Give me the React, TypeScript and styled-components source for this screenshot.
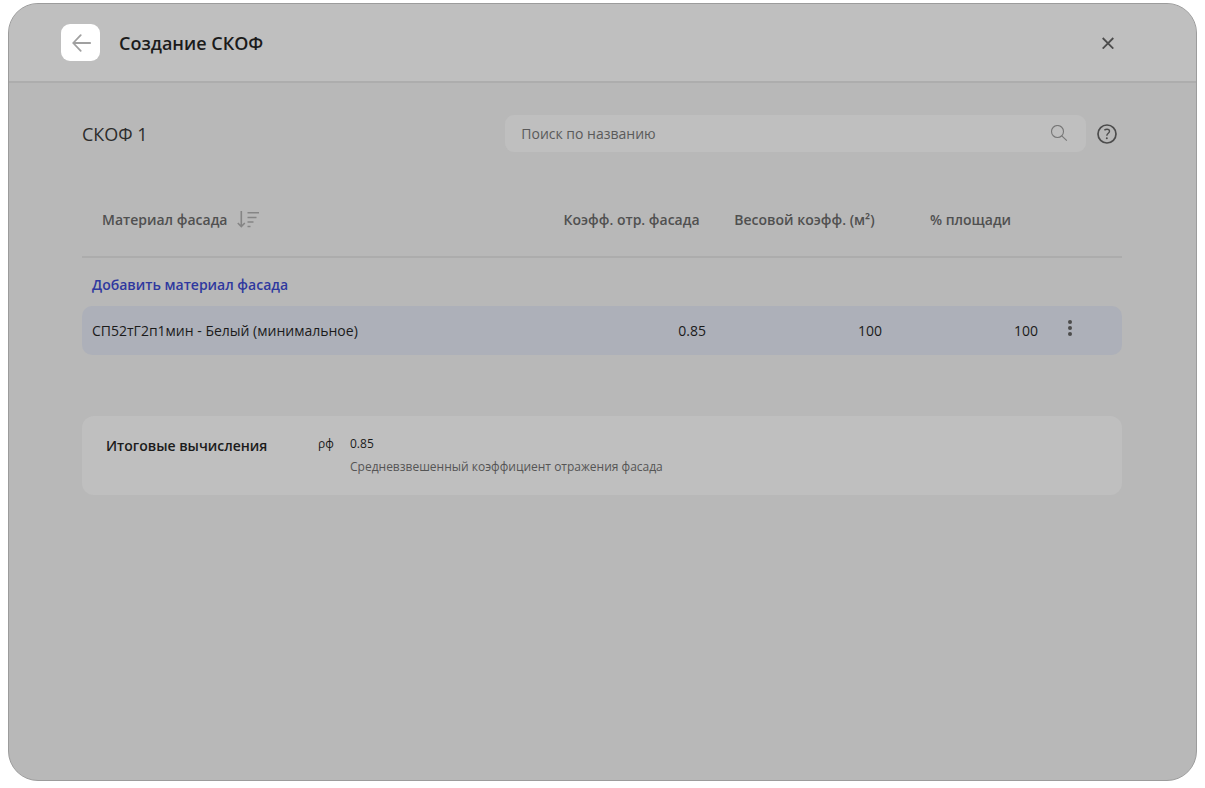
import React from "react";
import styled, { createGlobalStyle } from "styled-components";

const GlobalStyle = createGlobalStyle`
  *, *::before, *::after { box-sizing: border-box; }
  body {
    margin: 0;
    background: #ffffff;
    color: #1b1b1b;
    font-family: "Open Sans", "Noto Sans", sans-serif;
    font-size: 14px;
    line-height: 20px;
  }
  button, input { font: inherit; color: inherit; }
`;

const Page = styled.div`
  display: flex;
  min-height: 100vh;
  padding: 3px 8px 7px;
`;

const Dialog = styled.main`
  flex: 1;
  min-width: 0;
  overflow: hidden;
  border: 1px solid #9c9c9c;
  border-radius: 30px;
  background: #b8b8b8;
`;

const Header = styled.header`
  display: flex;
  align-items: center;
  gap: 19px;
  height: 79px;
  padding: 0 76px 0 52px;
  border-bottom: 2px solid #adadad;
  background: #bfbfbf;
`;

const IconButton = styled.button<{ $width?: number }>`
  display: flex;
  align-items: center;
  justify-content: center;
  width: ${({ $width = 24 }) => $width}px;
  height: 24px;
  padding: 0;
  border: 0;
  background: none;
  color: #4c4c4c;
  cursor: pointer;
`;

const BackButton = styled(IconButton)`
  width: 39px;
  height: 37px;
  border-radius: 9px;
  background: #ffffff;
  color: #a0a0a0;
`;

const Title = styled.h1`
  flex: 1;
  margin: 0;
  font-size: 18px;
  font-weight: 600;
  line-height: 24px;
`;

const Content = styled.div`
  padding: 32px 74px 32px 73px;
`;

const Toolbar = styled.div`
  display: flex;
  align-items: center;
  gap: 9px;
  padding-right: 3px;
`;

const GroupName = styled.h2`
  flex: 1;
  margin: 0;
  color: #2c2c2c;
  font-size: 18px;
  font-weight: 400;
  line-height: 24px;
`;

const SearchBox = styled.label`
  display: flex;
  align-items: center;
  width: 56%;
  height: 37px;
  padding: 0 18px 0 16px;
  border-radius: 9px;
  background: #bfbfbf;
  color: #777777;
`;

const SearchInput = styled.input`
  flex: 1;
  min-width: 0;
  padding: 0;
  border: 0;
  outline: 0;
  background: none;
  &::placeholder { color: #5a5a5a; opacity: 1; }
`;

const Table = styled.table`
  width: 100%;
  margin-top: 30px;
  border-collapse: separate;
  border-spacing: 0;
  table-layout: fixed;
`;

const Column = styled.col<{ $width?: number }>`
  width: ${({ $width }) => ($width ? `${$width}px` : "auto")};
`;

const HeadCell = styled.th<{ $start?: boolean }>`
  height: 76px;
  padding: ${({ $start }) => ($start ? "2px 0 0 20px" : "2px 3px 0 0")};
  border-bottom: 2px solid #acacac;
  color: #505050;
  font-weight: 600;
  text-align: ${({ $start }) => ($start ? "left" : "center")};
  white-space: nowrap;
`;

const HeadLabel = styled.span`
  display: flex;
  align-items: center;
  gap: 9px;
`;

const SortButton = styled(IconButton)`
  color: #858585;
`;

const AddCell = styled.td`
  height: 48px;
  padding: 6px 10px 0;
`;

const AddButton = styled.button`
  padding: 0;
  border: 0;
  background: none;
  color: #2f389f;
  font-weight: 600;
  cursor: pointer;
`;

const Cell = styled.td<{ $numeric?: boolean }>`
  height: 49px;
  padding: 0 12px 0 10px;
  background: #adb0b9;
  text-align: ${({ $numeric }) => ($numeric ? "right" : "left")};
  &:first-child { border-radius: 10px 0 0 10px; }
`;

const MenuCell = styled(Cell)`
  padding: 0 0 6px;
  border-radius: 0 10px 10px 0;
`;

const Summary = styled.section`
  display: flex;
  align-items: flex-start;
  min-height: 79px;
  margin-top: 61px;
  padding: 18px 24px;
  border-radius: 12px;
  background: #bfbfbf;
`;

const SummaryTitle = styled.h3`
  width: 212px;
  margin: 0;
  padding-top: 2px;
  font-size: 14px;
  font-weight: 600;
  line-height: 20px;
`;

const Results = styled.dl`
  display: grid;
  grid-template-columns: 32px auto;
  row-gap: 3px;
  margin: 0;
  font-size: 12px;
  line-height: 20px;
`;

const Symbol = styled.dt``;

const Value = styled.dd<{ $muted?: boolean }>`
  grid-column: 2;
  margin: 0;
  color: ${({ $muted }) => ($muted ? "#555555" : "#1b1b1b")};
  font-weight: ${({ $muted }) => ($muted ? 400 : 500)};
`;

const BackIcon = () => (
  <svg width="20" height="18" viewBox="0 0 20 18" fill="none" stroke="currentColor" strokeWidth="1.8" strokeLinecap="round" strokeLinejoin="round" aria-hidden="true">
    <path d="M19.2 9H2.200M9.700 1.200 2.200 9l7.500 7.800" />
  </svg>
);

const CloseIcon = () => (
  <svg width="12" height="12" viewBox="0 0 12 12" stroke="currentColor" strokeWidth="1.8" aria-hidden="true">
    <path d="M.7 1l10.600 10.600M11.300 1 .7 11.600" />
  </svg>
);

const SearchIcon = () => (
  <svg width="18" height="18" viewBox="0 0 18 18" fill="none" stroke="currentColor" strokeWidth="1.1" aria-hidden="true">
    <circle cx="7.5" cy="6.500" r="6" />
    <path d="m11.800 10.800 5 4.800" />
  </svg>
);

const HelpIcon = () => (
  <svg width="20" height="20" viewBox="0 0 20 20" fill="none" stroke="currentColor" strokeWidth="1.7" aria-hidden="true">
    <circle cx="10" cy="10" r="9" />
    <path d="M7.400 6.100c.8-.6 1.700-.9 2.600-.9 1.500 0 2.500.7 2.500 2 0 2-2.700 2.100-2.700 4.600" strokeWidth="1.4" />
    <circle cx="9.800" cy="14.200" r="1" fill="currentColor" stroke="none" />
  </svg>
);

const SortIcon = () => (
  <svg width="24" height="20" viewBox="0 0 24 20" fill="none" stroke="currentColor" strokeWidth="1.6" aria-hidden="true">
    <path d="M5.300 1v15.500M1.800 13l3.500 3.500L8.800 13" />
    <path d="M11.500 2.800H23M11.500 7.500h9M11.500 12h6M11.500 16.500h3" />
  </svg>
);

const DotsIcon = () => (
  <svg width="4" height="18" viewBox="0 0 4 18" fill="currentColor" aria-hidden="true">
    <circle cx="2" cy="3" r="2" />
    <circle cx="2" cy="9" r="2" />
    <circle cx="2" cy="15" r="2" />
  </svg>
);

const materials = [
  { name: "СП52тГ2п1мин - Белый (минимальное)", reflection: "0.85", weight: "100", area: "100" },
];

export default function App() {
  return (
    <>
      <GlobalStyle />
      <Page>
        <Dialog>
          <Header>
            <BackButton type="button" aria-label="Назад"><BackIcon /></BackButton>
            <Title>Создание СКОФ</Title>
            <IconButton type="button" aria-label="Закрыть"><CloseIcon /></IconButton>
          </Header>
          <Content>
            <Toolbar>
              <GroupName>СКОФ 1</GroupName>
              <SearchBox>
                <SearchInput type="text" placeholder="Поиск по названию" aria-label="Поиск по названию" />
                <SearchIcon />
              </SearchBox>
              <IconButton type="button" aria-label="Справка"><HelpIcon /></IconButton>
            </Toolbar>
            <Table>
              <colgroup>
                <Column />
                <Column $width={170} />
                <Column $width={176} />
                <Column $width={156} />
                <Column $width={72} />
              </colgroup>
              <thead>
                <tr>
                  <HeadCell scope="col" $start>
                    <HeadLabel>
                      Материал фасада
                      <SortButton type="button" aria-label="Сортировать"><SortIcon /></SortButton>
                    </HeadLabel>
                  </HeadCell>
                  <HeadCell scope="col">Коэфф. отр. фасада</HeadCell>
                  <HeadCell scope="col">Весовой коэфф. (м²)</HeadCell>
                  <HeadCell scope="col">% площади</HeadCell>
                  <HeadCell as="td" />
                </tr>
              </thead>
              <tbody>
                <tr>
                  <AddCell colSpan={5}>
                    <AddButton type="button">Добавить материал фасада</AddButton>
                  </AddCell>
                </tr>
                {materials.map((item) => (
                  <tr key={item.name}>
                    <Cell>{item.name}</Cell>
                    <Cell $numeric>{item.reflection}</Cell>
                    <Cell $numeric>{item.weight}</Cell>
                    <Cell $numeric>{item.area}</Cell>
                    <MenuCell>
                      <IconButton type="button" aria-label="Действия" $width={40}><DotsIcon /></IconButton>
                    </MenuCell>
                  </tr>
                ))}
              </tbody>
            </Table>
            <Summary>
              <SummaryTitle>Итоговые вычисления</SummaryTitle>
              <Results>
                <Symbol>ρф</Symbol>
                <Value>0.85</Value>
                <Value $muted>Средневзвешенный коэффициент отражения фасада</Value>
              </Results>
            </Summary>
          </Content>
        </Dialog>
      </Page>
    </>
  );
}
